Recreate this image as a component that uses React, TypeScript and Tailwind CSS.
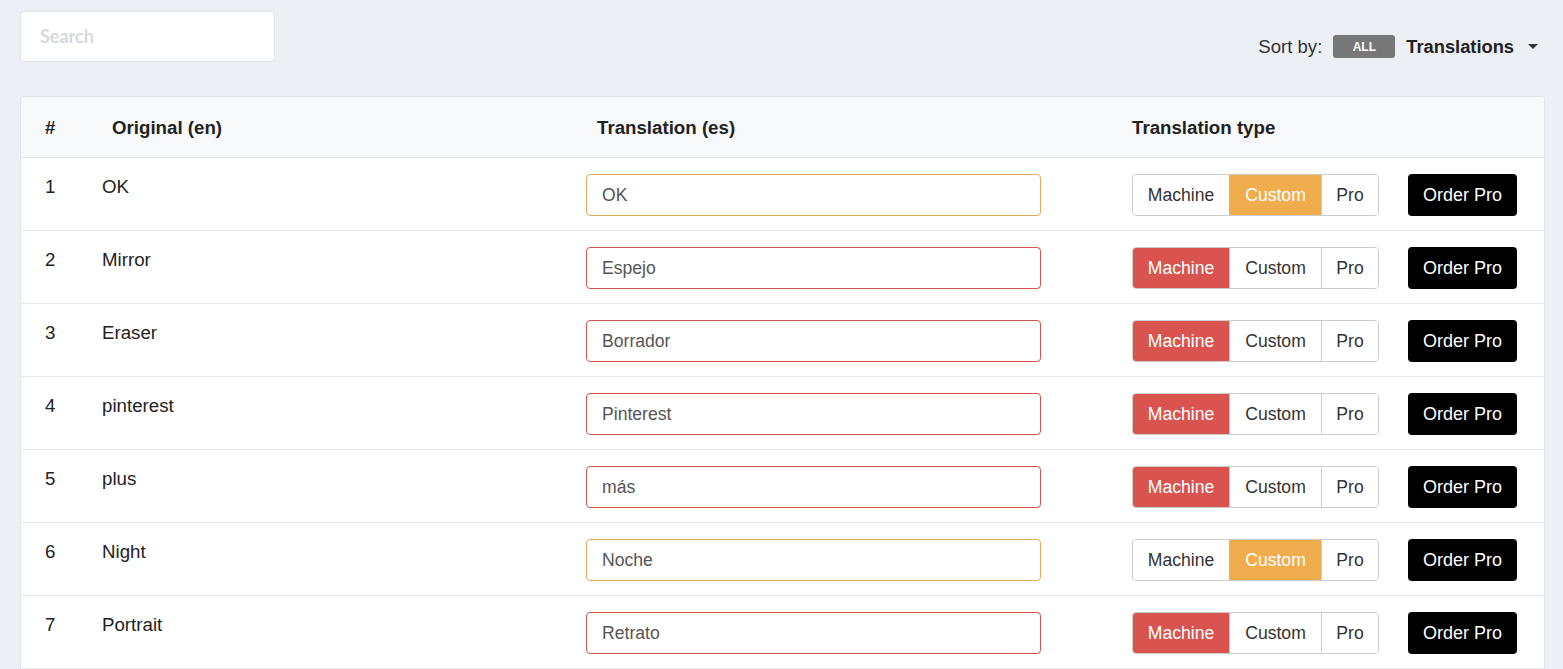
import React from "react";

type Kind = "machine" | "custom";
const rows: { n: number; en: string; es: string; kind: Kind }[] = [
  { n: 1, en: "OK", es: "OK", kind: "custom" },
  { n: 2, en: "Mirror", es: "Espejo", kind: "machine" },
  { n: 3, en: "Eraser", es: "Borrador", kind: "machine" },
  { n: 4, en: "pinterest", es: "Pinterest", kind: "machine" },
  { n: 5, en: "plus", es: "más", kind: "machine" },
  { n: 6, en: "Night", es: "Noche", kind: "custom" },
  { n: 7, en: "Portrait", es: "Retrato", kind: "machine" },
];

function Row({ r }: { r: (typeof rows)[number] }) {
  const machine = r.kind === "machine";
  return (
    <div className="flex h-[73px] items-start border-b border-[#e6e8eb]">
      <div className="w-[81px] pl-[24px] pt-[18px] text-[18.7px] leading-[22px]">{r.n}</div>
      <div className="w-[484px] pt-[18px] text-[18.7px] leading-[22px]">{r.en}</div>
      <div className="w-[546px] pt-[16px]">
        <div
          className={
            "flex h-[42px] w-[455px] items-center rounded-[4px] border bg-white pl-[15px] text-[17.6px] text-[#555] " +
            (machine ? "border-[#d9534f]" : "border-[#e8a857]")
          }
        >
          {r.es}
        </div>
      </div>
      <div className="flex items-center pt-[16px] text-[17.6px]">
        <div className="flex h-[42px] overflow-hidden rounded-[4px] border border-[#ccc]">
          <div
            className={
              "flex w-[96px] items-center justify-center " +
              (machine ? "bg-[#d9534f] text-white" : "bg-white text-[#333]")
            }
          >
            Machine
          </div>
          <div
            className={
              "flex w-[92px] items-center justify-center border-l " +
              (machine
                ? "border-[#ccc] bg-white text-[#333]"
                : "border-[#f0ad4e] bg-[#f0ad4e] text-white")
            }
          >
            Custom
          </div>
          <div className="flex w-[57px] items-center justify-center border-l border-[#ccc] bg-white text-[#333]">
            Pro
          </div>
        </div>
        <div className="ml-[29px] flex h-[42px] w-[109px] items-center justify-center rounded-[4px] bg-black text-[18px] text-white">
          Order Pro
        </div>
      </div>
    </div>
  );
}

export default function App() {
  return (
    <div
      className="min-h-[669px] w-full bg-[#eceff4] text-[#222]"
      style={{ fontFamily: '"Liberation Sans", Arial, sans-serif' }}
    >
      <div className="flex items-start justify-between pl-[20px] pr-[25px] pt-[11px]">
        <div
          className="flex h-[51px] w-[255px] items-center rounded-[4px] border border-[#dfe2e6] bg-white pl-[19px] text-[18px] font-bold text-[#d6d9dd]"
          style={{ fontFamily: 'Lato, "Open Sans", sans-serif' }}
        >
          Search
        </div>
        <div className="mt-[22px] flex items-center">
          <span className="text-[18.6px] text-[#333]">Sort by:</span>
          <span className="ml-[11px] flex h-[23px] w-[62px] items-center justify-center rounded-[3px] bg-[#777] text-[12px] font-bold text-white">
            ALL
          </span>
          <span className="ml-[11px] text-[18.3px] font-bold text-[#222]">Translations</span>
          <svg className="ml-[14px]" width="10" height="6" viewBox="0 0 10 6">
            <path d="M0 0 L10 0 L5 5 Z" fill="#333" />
          </svg>
        </div>
      </div>
      <div className="ml-[20px] mr-[18px] mt-[34px] overflow-hidden rounded-t-[4px] border border-b-0 border-[#e1e4e8] bg-white">
        <div className="flex h-[61px] items-center border-b border-[#e1e4e8] bg-[#f8f9fb] pt-[2px] text-[18.7px] font-bold">
          <div className="w-[81px] pl-[24px]">#</div>
          <div className="w-[484px] pl-[10px]">Original (en)</div>
          <div className="w-[546px] pl-[11px]">Translation (es)</div>
          <div>Translation type</div>
        </div>
        {rows.map((r) => (
          <Row key={r.n} r={r} />
        ))}
      </div>
    </div>
  );
}
